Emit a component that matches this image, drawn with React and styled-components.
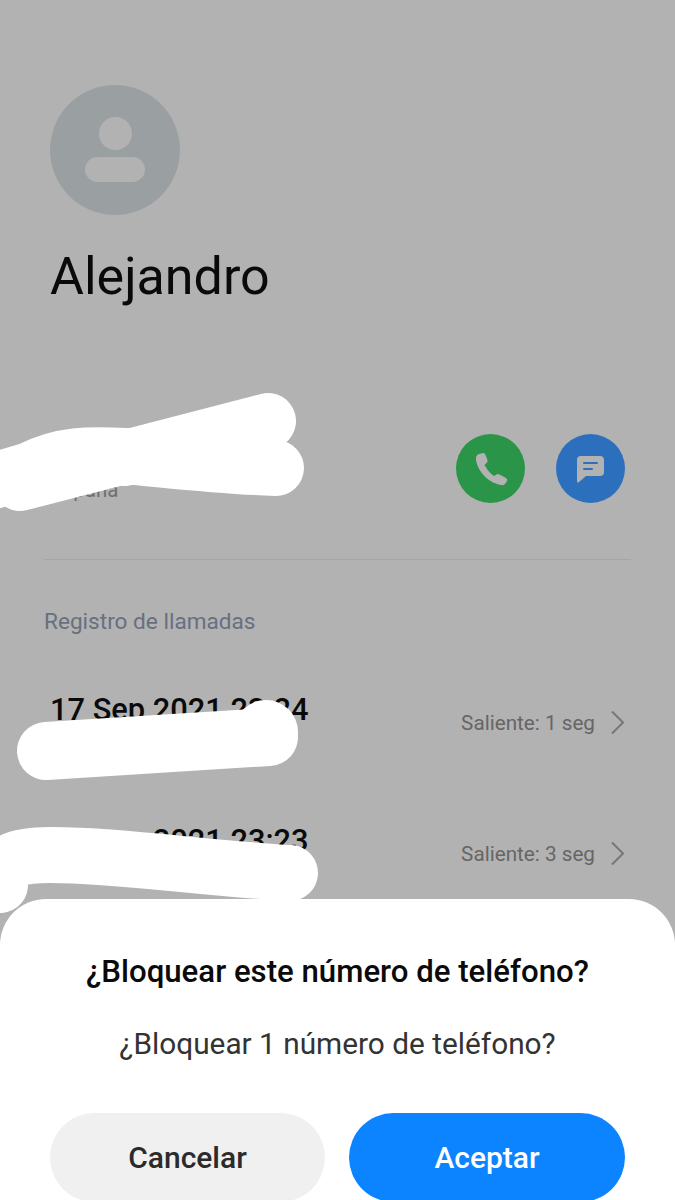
import React from 'react';
import styled, { createGlobalStyle } from 'styled-components';

const GlobalStyle = createGlobalStyle`
  html, body {
    margin: 0;
    padding: 0;
    background: #b2b2b2;
    font-family: Roboto, "Noto Sans", sans-serif;
  }
  * {
    box-sizing: border-box;
  }
`;

const Screen = styled.div`
  position: relative;
  width: 675px;
  height: 1200px;
  overflow: hidden;
  background: #b2b2b2;
`;

const Contact = styled.section`
  padding: 85px 44px 0;
`;

const Avatar = styled.div`
  display: flex;
  flex-direction: column;
  align-items: center;
  width: 130px;
  height: 130px;
  margin-left: 6px;
  padding-top: 32px;
  border-radius: 50%;
  background: #9aa0a2;
`;

const AvatarHead = styled.div`
  width: 33px;
  height: 33px;
  border-radius: 50%;
  background: #b2b2b2;
`;

const AvatarBody = styled.div`
  width: 60px;
  height: 25px;
  margin-top: 7px;
  border-radius: 13px;
  background: #b2b2b2;
`;

const Name = styled.h1`
  margin: 30px 0 0 6px;
  font-size: 52px;
  line-height: 64px;
  font-weight: 400;
  color: #0a0a0a;
`;

const PhoneRow = styled.div`
  display: flex;
  justify-content: space-between;
  align-items: flex-start;
  height: 251px;
  padding: 125px 6px 0 7px;
  border-bottom: 1px solid #a4a6a6;
`;

const Region = styled.span`
  margin-top: 44px;
  font-size: 20.5px;
  line-height: 24px;
  color: #6f6f6f;
`;

const Actions = styled.div`
  display: flex;
  gap: 31px;
`;

const RoundAction = styled.div`
  width: 69px;
  height: 69px;
  border-radius: 50%;
  background: ${(props) => props.$color};
  svg {
    display: block;
  }
`;

const SectionTitle = styled.h2`
  margin: 48px 0 0;
  font-size: 22.6px;
  line-height: 28px;
  font-weight: 400;
  color: #687080;
`;

const CallList = styled.div`
  display: flex;
  flex-direction: column;
  gap: 93px;
  margin-top: 55px;
  padding-left: 7px;
`;

const CallRow = styled.div`
  display: flex;
  align-items: flex-start;
  justify-content: space-between;
  height: 38px;
`;

const CallDate = styled.span`
  margin-left: -1px;
  font-size: 30.8px;
  line-height: 38px;
  font-weight: 500;
  color: #0a0a0a;
`;

const CallInfo = styled.div`
  display: flex;
  align-items: center;
  gap: 15px;
  margin-top: 19px;
  padding-right: 6px;
  font-size: 20.7px;
  line-height: 24px;
  color: #666;
`;

const Scribbles = styled.svg`
  position: absolute;
  top: 0;
  left: 0;
  width: 675px;
  height: 1200px;
  pointer-events: none;
`;

const Dialog = styled.div`
  position: absolute;
  left: 0;
  right: 0;
  top: 899px;
  height: 301px;
  padding: 50px 50px 0;
  border-radius: 46px 46px 0 0;
  background: #fff;
  text-align: center;
`;

const DialogTitle = styled.h3`
  margin: 0 -20px;
  font-size: 31.2px;
  line-height: 46px;
  font-weight: 500;
  color: #0a0a0a;
`;

const DialogText = styled.p`
  margin: 26px 0 0;
  font-size: 29.8px;
  line-height: 46px;
  color: #333;
`;

const Buttons = styled.div`
  display: grid;
  grid-template-columns: 275px 276px;
  gap: 24px;
  margin-top: 46px;
`;

const Button = styled.button`
  height: 89px;
  border: none;
  border-radius: 45px;
  font-family: inherit;
  font-size: 30px;
  font-weight: 500;
  color: ${(props) => (props.$primary ? '#fff' : '#2b2b2b')};
  background: ${(props) => (props.$primary ? '#0d84ff' : '#f0f0f0')};
`;

const PhoneIcon = () => (
  <svg width="69" height="69" viewBox="0 0 69 69">
    <path
      fill="#b2b2b2"
      d="M23 20 L27 19 Q29 19 29.5 21 L31.5 26 Q32 28 30.5 29 L28.5 31 Q33 39 38 42 L40.5 40.5 Q42 39.5 43.5 40.5 L50 44 Q52 45.5 51 47 L49 50 Q48 51.5 45 51 C33 49 22 38 20 26 Q19.5 21 23 20 Z"
    />
  </svg>
);

const MessageIcon = () => (
  <svg width="69" height="69" viewBox="0 0 69 69">
    <path
      fill="#b2b2b2"
      d="M25 22 H44 Q48 22 48 26 V38 Q48 42 44 42 H30 L22.5 48.5 Q21 49 21 47 V26 Q21 22 25 22 Z"
    />
    <path stroke="#2c70bd" strokeWidth="2" strokeLinecap="round" d="M28 29 H41 M28 35 H36" />
  </svg>
);

const Chevron = () => (
  <svg width="15" height="25" viewBox="0 0 15 25" fill="none">
    <path stroke="#777" strokeWidth="2" d="M2 1.5 L13 12.5 L2 23.5" />
  </svg>
);

const calls = [
  { date: '17 Sep 2021 23:24', info: 'Saliente: 1 seg' },
  { date: '17 Sep 2021 23:23', info: 'Saliente: 3 seg' },
];

const App = () => (
  <Screen>
    <GlobalStyle />
    <Contact>
      <Avatar>
        <AvatarHead />
        <AvatarBody />
      </Avatar>
      <Name>Alejandro</Name>
      <PhoneRow>
        <Region>España</Region>
        <Actions>
          <RoundAction $color="#2a9548">
            <PhoneIcon />
          </RoundAction>
          <RoundAction $color="#2c70bd">
            <MessageIcon />
          </RoundAction>
        </Actions>
      </PhoneRow>
      <SectionTitle>Registro de llamadas</SectionTitle>
      <CallList>
        {calls.map((call) => (
          <CallRow key={call.date}>
            <CallDate>{call.date}</CallDate>
            <CallInfo>
              {call.info}
              <Chevron />
            </CallInfo>
          </CallRow>
        ))}
      </CallList>
    </Contact>

    {/* marker strokes over the personal data */}
    <Scribbles viewBox="0 0 675 1200" fill="none" stroke="#fff" strokeLinecap="round" strokeLinejoin="round">
      <path strokeWidth="56" d="M268 421 L125 458" />
      <path strokeWidth="56" d="M276 468 C220 466 170 460 125 456 C90 454 60 454 30 470 L-10 482" />
      <path strokeWidth="56" d="M20 483 L125 456" />
      <path strokeWidth="58" d="M46 751 L269 737" />
      <path strokeWidth="64" d="M266 732 L266 732" />
      <path strokeWidth="56" d="M290 873 C200 868 120 855 50 855 C15 855 -2 862 0 885" />
    </Scribbles>

    <Dialog>
      <DialogTitle>¿Bloquear este número de teléfono?</DialogTitle>
      <DialogText>¿Bloquear 1 número de teléfono?</DialogText>
      <Buttons>
        <Button>Cancelar</Button>
        <Button $primary>Aceptar</Button>
      </Buttons>
    </Dialog>
  </Screen>
);

export default App;
